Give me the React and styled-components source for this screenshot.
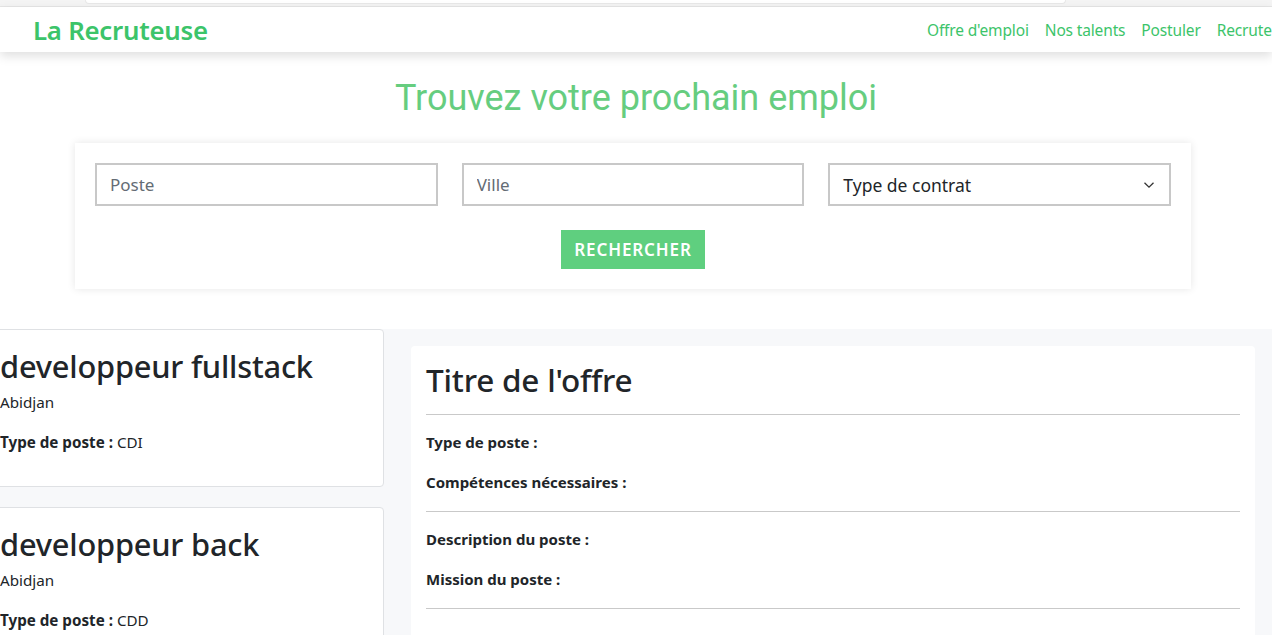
import React from "react";
import styled, { createGlobalStyle } from "styled-components";

const Global = createGlobalStyle`
  html, body { margin: 0; padding: 0; background: #fff; }
  body { font-family: "Noto Sans", "Open Sans", sans-serif; color: #212529; overflow: hidden; }
  * { box-sizing: border-box; }
`;

const Page = styled.div`
  width: 1272px;
  height: 635px;
  overflow: hidden;
  background: #fff;
`;

const TopStrip = styled.div`
  height: 7px;
  background: #f4f4f4;
  border-bottom: 1px solid #e6e6e6;
  padding: 0 206px 0 85px;
`;

const TopPill = styled.div`
  height: 4px;
  background: #fff;
  border-radius: 0 0 8px 8px;
  border: 1px solid #e8e8e8;
  border-top: none;
`;

const Navbar = styled.nav`
  position: relative;
  z-index: 2;
  height: 45px;
  background: #fff;
  box-shadow: 0 4px 10px rgba(0, 0, 0, 0.13);
  display: flex;
  align-items: center;
  justify-content: space-between;
  padding-left: 33px;
  overflow: hidden;
`;

const Logo = styled.div`
  font-size: 25.8px;
  font-weight: 600;
  color: #3cc46a;
  letter-spacing: -0.25px;
`;

const NavLinks = styled.div`
  display: flex;
  gap: 16px;
  margin-right: -6px;
  white-space: nowrap;
`;

const NavLink = styled.a`
  font-size: 15.5px;
  color: #3cc46a;
  text-decoration: none;
  letter-spacing: -0.15px;
`;

const Hero = styled.section`
  padding: 24px 0 40px;
`;

const Heading = styled.h1`
  margin: 0 0 23px;
  text-align: center;
  font-family: Roboto, "Liberation Sans", sans-serif;
  font-weight: 400;
  font-size: 36px;
  line-height: 44px;
  color: #66cd7f;
`;

const SearchCard = styled.div`
  margin-left: 75px;
  width: 1116px;
  background: #fff;
  box-shadow: 0 0 8px rgba(0, 0, 0, 0.1);
  padding: 20px 20px;
  display: flex;
  flex-direction: column;
  align-items: center;
  gap: 24px;
`;

const Fields = styled.div`
  width: 100%;
  display: grid;
  grid-template-columns: repeat(3, 1fr);
  gap: 24px;
`;

const Input = styled.input`
  height: 43px;
  border: 2px solid #c8c8c8;
  padding: 0 13px;
  font-family: "Noto Sans", "Open Sans", sans-serif;
  font-size: 17px;
  color: #212529;
  outline: none;
  &::placeholder { color: #646c74; }
`;

const SelectBox = styled.div`
  height: 43px;
  border: 2px solid #c8c8c8;
  padding: 0 14px 0 13px;
  display: flex;
  align-items: center;
  justify-content: space-between;
  font-size: 17.5px;
  color: #212529;
`;

const SearchButton = styled.button`
  height: 39px;
  width: 144px;
  border: none;
  background: #5fcf7f;
  color: #fff;
  font-family: "Noto Sans", "Open Sans", sans-serif;
  font-weight: 600;
  font-size: 17px;
  letter-spacing: 0.9px;
`;

const Results = styled.section`
  background: #f7f8fa;
  display: grid;
  grid-template-columns: 401px 1fr;
  gap: 27px;
  margin-left: -17px;
  padding-right: 17px;
  min-height: 320px;
`;

const OfferList = styled.div`
  display: flex;
  flex-direction: column;
  gap: 20px;
`;

const OfferCard = styled.article`
  background: #fff;
  border: 1px solid #dfe1e4;
  border-radius: 4px;
  padding: 16px 17px 33px 16px;
`;

const OfferTitle = styled.h2`
  margin: 0 0 6px;
  font-size: 30.8px;
  font-weight: 500;
  line-height: 40px;
  color: #212529;
  letter-spacing: -0.2px;
`;

const City = styled.p`
  margin: 0 0 19px;
  font-size: 15.2px;
  line-height: 21px;
`;

const Line = styled.p`
  margin: 0;
  font-size: 15.2px;
  line-height: 21px;
  strong { font-weight: 700; }
`;

const Detail = styled.article`
  margin-top: 17px;
  background: #fff;
  border-radius: 4px;
  padding: 14px 15px 20px;
`;

const DetailTitle = styled.h2`
  margin: 0 0 14px;
  font-size: 31.5px;
  font-weight: 500;
  line-height: 40px;
  color: #212529;
  letter-spacing: -0.2px;
`;

const Rule = styled.hr`
  margin: 0;
  border: none;
  border-top: 1px solid #c9c9c9;
`;

const Group = styled.div`
  padding: 17px 0 18px;
  display: flex;
  flex-direction: column;
  gap: 19px;
`;

const Label = styled.div`
  font-size: 15px;
  font-weight: 700;
  line-height: 21px;
`;

const Chevron = () => (
  <svg width="12" height="8" viewBox="0 0 12 8" fill="none">
    <path d="M1.5 1.8 6 6.2l4.5-4.4" stroke="#333" strokeWidth="1.3" />
  </svg>
);

const offers = [
  { title: "developpeur fullstack", city: "Abidjan", type: "CDI" },
  { title: "developpeur back", city: "Abidjan", type: "CDD" },
];

export default function App() {
  return (
    <Page>
      <Global />
      <TopStrip>
        <TopPill />
      </TopStrip>
      <Navbar>
        <Logo>La Recruteuse</Logo>
        <NavLinks>
          <NavLink href="#">Offre d'emploi</NavLink>
          <NavLink href="#">Nos talents</NavLink>
          <NavLink href="#">Postuler</NavLink>
          <NavLink href="#">Recruter</NavLink>
        </NavLinks>
      </Navbar>
      <Hero>
        <Heading>Trouvez votre prochain emploi</Heading>
        <SearchCard>
          <Fields>
            <Input placeholder="Poste" />
            <Input placeholder="Ville" />
            <SelectBox>
              <span>Type de contrat</span>
              <Chevron />
            </SelectBox>
          </Fields>
          <SearchButton>RECHERCHER</SearchButton>
        </SearchCard>
      </Hero>
      <Results>
        <OfferList>
          {offers.map((o) => (
            <OfferCard key={o.title}>
              <OfferTitle>{o.title}</OfferTitle>
              <City>{o.city}</City>
              <Line>
                <strong>Type de poste :</strong> {o.type}
              </Line>
            </OfferCard>
          ))}
        </OfferList>
        <Detail>
          <DetailTitle>Titre de l'offre</DetailTitle>
          <Rule />
          <Group>
            <Label>Type de poste :</Label>
            <Label>Compétences nécessaires :</Label>
          </Group>
          <Rule />
          <Group>
            <Label>Description du poste :</Label>
            <Label>Mission du poste :</Label>
          </Group>
          <Rule />
        </Detail>
      </Results>
    </Page>
  );
}
